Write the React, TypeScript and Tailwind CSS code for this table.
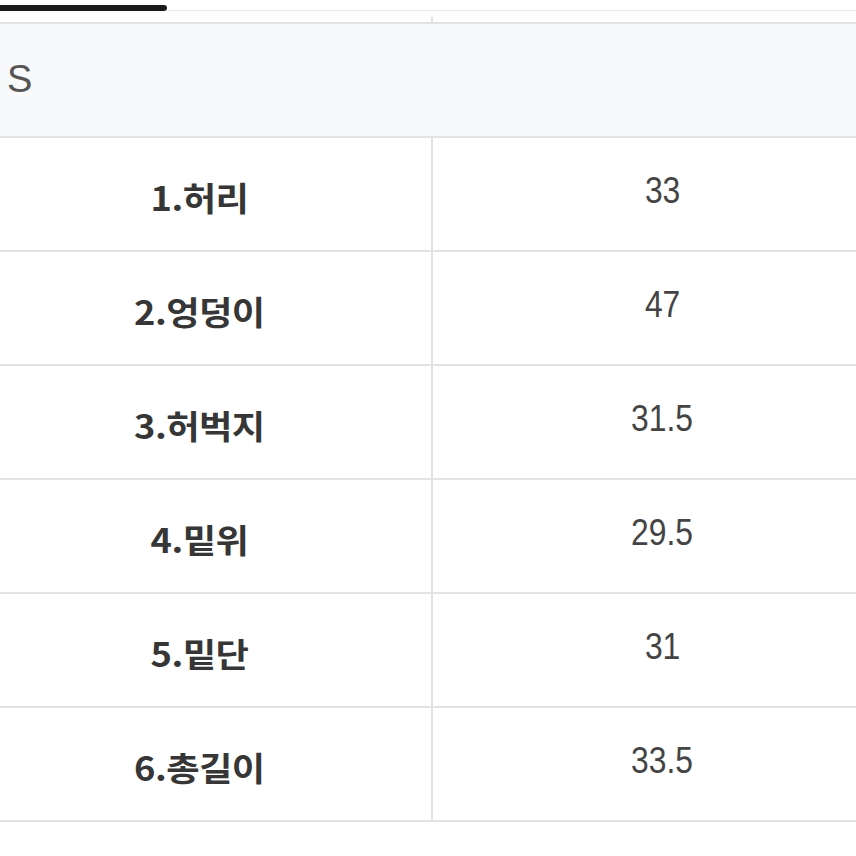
import React from "react";

const rows = [
  ["1.허리", "33"],
  ["2.엉덩이", "47"],
  ["3.허벅지", "31.5"],
  ["4.밑위", "29.5"],
  ["5.밑단", "31"],
  ["6.총길이", "33.5"],
];

export default function App() {
  return (
    <div className="w-[856px] h-[856px] bg-white overflow-hidden">
      <div className="flex items-end pt-[5px]">
        <div className="w-[167px] h-[6px] bg-[#1a1a1a] rounded-r-[3px]" />
        <div className="flex-1 h-[1px] bg-[#e9e9e9]" />
      </div>
      <div className="w-[924px] -ml-[32px]">
        <div className="grid grid-cols-[465px_459px] h-[11px]">
          <div className="border-r-2 border-transparent" />
          <div className="mt-[6px] border-l-2 border-[#e2e2e2] -ml-[2px]" />
        </div>
        <div className="h-[116px] border-y-2 border-[#e2e2e2] bg-[#f8f9fb] flex items-center">
          <span
            className="pl-[39px] pb-[2px] text-[38px] text-[#555] leading-none"
            style={{ fontFamily: '"Liberation Sans", Arial, sans-serif' }}
          >
            S
          </span>
        </div>
        {rows.map(([label, value]) => (
          <div
            key={label}
            className="grid grid-cols-[465px_459px] h-[114px] border-b-2 border-[#e2e2e2]"
          >
            <div className="border-r-2 border-[#e2e2e2] flex items-center justify-center pt-[6px]">
              <span
                className="text-[33px] font-bold text-[#363636] leading-none tracking-[-0.5px] inline-block scale-x-[1.1]"
                style={{ fontFamily: '"Noto Sans CJK KR", "Noto Sans", sans-serif' }}
              >
                {label}
              </span>
            </div>
            <div className="flex items-center justify-center pb-[8px]">
              <span
                className="text-[37px] text-[#444] leading-none inline-block scale-x-[0.86]"
                style={{ fontFamily: '"Liberation Sans", Arial, sans-serif' }}
              >
                {value}
              </span>
            </div>
          </div>
        ))}
      </div>
    </div>
  );
}
